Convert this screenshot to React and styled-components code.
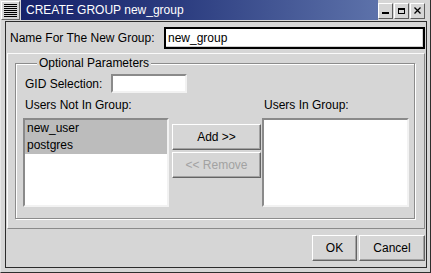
import React from 'react';
import styled, { createGlobalStyle } from 'styled-components';

const GlobalStyle = createGlobalStyle`
  html, body {
    margin: 0;
    padding: 0;
    background: #d6d6d6;
  }
  body {
    font-family: "Liberation Sans", Arial, sans-serif;
    font-size: 12px;
    color: #000;
  }
  * {
    box-sizing: border-box;
  }
`;

const Window = styled.div`
  width: 431px;
  height: 273px;
  display: flex;
  flex-direction: column;
  background: #d6d6d6;
  border-left: 1px solid #e6e6e6;
  border-right: 1px solid #2e2e2e;
  border-bottom: 1px solid #2e2e2e;
  padding: 0 3px 4px 0;
`;

const TitleBar = styled.div`
  height: 21px;
  flex-shrink: 0;
  display: flex;
  align-items: flex-start;
`;

const MenuButton = styled.div`
  width: 19px;
  height: 19px;
  margin-top: 1px;
  display: flex;
  align-items: center;
  justify-content: center;
  background: #d6d6d6;
  border: 1px solid;
  border-color: #fff #6a6a6a #6a6a6a #fff;
`;

const Title = styled.div`
  flex: 1;
  height: 20px;
  margin-left: 1px;
  padding-left: 5px;
  line-height: 20px;
  color: #fff;
  font-size: 12px;
  white-space: nowrap;
  background: linear-gradient(to right, #17226a 0%, #2c3d80 45%, #5d72aa 100%);
`;

const WinButtons = styled.div`
  display: flex;
  gap: 1px;
  margin: 3px 2px 0 0;
`;

const WinButton = styled.div`
  width: 15px;
  height: 16px;
  display: flex;
  align-items: center;
  justify-content: center;
  background: #d6d6d6;
  border: 1px solid;
  border-color: #fff #5e5e5e #5e5e5e #fff;
`;

const Client = styled.div`
  flex: 1;
  margin-left: 4px;
  border: 1px solid #2c2c2c;
  display: flex;
  flex-direction: column;
`;

const NameRow = styled.div`
  display: flex;
  align-items: center;
  padding: 5px 1px 0 4px;
`;

const Label = styled.span`
  white-space: nowrap;
  margin-left: ${p => p.$indent || 0}px;
`;

const NameInput = styled.input`
  width: 261px;
  height: 22px;
  margin-left: auto;
  padding: 0 2px;
  font: inherit;
  color: #000;
  background: #fff;
  border: 2px solid #000;
  box-shadow: inset -1px -1px 0 #cfcfcf;
  outline: none;
`;

const SmallInput = styled.input`
  width: 76px;
  height: 19px;
  padding: 0 2px;
  font: inherit;
  background: #fff;
  border: 2px solid;
  border-color: #8a8a8a #f2f2f2 #f2f2f2 #8a8a8a;
  outline: none;
`;

const Panel = styled.div`
  margin: 4px 1px 0;
  border: 1px solid;
  border-color: #fafafa #8a8a8a #8a8a8a #fafafa;
  padding: 0 9px 0 7px;
`;

const GroupBox = styled.fieldset`
  margin: 2px 0 9px;
  padding: 0;
  min-width: 0;
  border: 1px solid #8c8c8c;
  box-shadow: inset 1px 1px 0 #fff, 1px 1px 0 #fff;
`;

const Legend = styled.legend`
  margin-left: 21px;
  padding: 0 2px;
  height: 14px;
  line-height: 14px;
  background: #d6d6d6;
`;

const GroupBody = styled.div`
  padding: 4px 5px 11px 7px;
`;

const FieldRow = styled.div`
  display: flex;
  align-items: center;
  gap: 9px;
  padding-left: 2px;
`;

const ListsGrid = styled.div`
  display: grid;
  grid-template-columns: 146px 1fr 147px;
  grid-template-rows: 14px 89px;
  row-gap: 6px;
  margin-top: 5px;
`;

const ColumnLabel = styled.div`
  line-height: 14px;
  padding-left: 2px;
  white-space: nowrap;
  grid-column: ${p => p.$col};
`;

const ListBox = styled.div`
  background: #fff;
  border: 2px solid;
  border-color: #8a8a8a #f2f2f2 #f2f2f2 #8a8a8a;
  overflow: hidden;
`;

const ListItem = styled.div`
  height: 17px;
  line-height: 17px;
  padding-left: 2px;
  background: ${p => (p.$selected ? '#bcbcbc' : 'transparent')};
`;

const ButtonStack = styled.div`
  display: flex;
  flex-direction: column;
  gap: 2px;
  padding: 6px 1px 0 3px;
`;

const PushButton = styled.button`
  width: ${p => p.$width || 89}px;
  height: 26px;
  padding: 0;
  font: inherit;
  color: ${p => (p.disabled ? '#a2a2a2' : '#000')};
  background: #d6d6d6;
  border: 1px solid;
  border-color: #fff #646464 #646464 #fff;
  box-shadow: inset -1px -1px 0 #a2a2a2;
  outline: none;
`;

const ButtonRow = styled.div`
  display: flex;
  justify-content: flex-end;
  gap: 2px;
  padding: 6px 1px 6px 0;
`;

function MenuIcon() {
  return (
    <svg width="13" height="13" viewBox="0 0 13 13">
      {[0, 2, 4, 6, 8, 10, 12].map(y => (
        <rect key={y} x="0" y={y} width="13" height="1" fill="#000" />
      ))}
    </svg>
  );
}

function MinimizeIcon() {
  return (
    <svg width="8" height="8" viewBox="0 0 8 8">
      <rect x="0" y="5" width="7" height="2" fill="#000" />
    </svg>
  );
}

function MaximizeIcon() {
  return (
    <svg width="8" height="8" viewBox="0 0 8 8">
      <rect x="0.5" y="1.5" width="6" height="5" fill="none" stroke="#000" />
      <rect x="0" y="1" width="7" height="2" fill="#000" />
    </svg>
  );
}

function CloseIcon() {
  return (
    <svg width="8" height="8" viewBox="0 0 8 8">
      <path d="M0.5 0.5 L6.5 6.5 M6.5 0.5 L0.5 6.5" stroke="#000" strokeWidth="1.3" />
    </svg>
  );
}

export default function App() {
  const notInGroup = ['new_user', 'postgres'];

  return (
    <>
      <GlobalStyle />
      <Window>
        <TitleBar>
          <MenuButton>
            <MenuIcon />
          </MenuButton>
          <Title>CREATE GROUP new_group</Title>
          <WinButtons>
            <WinButton><MinimizeIcon /></WinButton>
            <WinButton><MaximizeIcon /></WinButton>
            <WinButton><CloseIcon /></WinButton>
          </WinButtons>
        </TitleBar>

        <Client>
          <NameRow>
            <Label>Name For The New Group:</Label>
            <NameInput readOnly value="new_group" />
          </NameRow>

          <Panel>
            <GroupBox>
              <Legend>Optional Parameters</Legend>
              <GroupBody>
                <FieldRow>
                  <Label>GID Selection:</Label>
                  <SmallInput readOnly value="" />
                </FieldRow>

                <ListsGrid>
                  <ColumnLabel $col={1}>Users Not In Group:</ColumnLabel>
                  <ColumnLabel $col={3}>Users In Group:</ColumnLabel>
                  <ListBox>
                    {notInGroup.map(name => (
                      <ListItem key={name} $selected>{name}</ListItem>
                    ))}
                  </ListBox>
                  <ButtonStack>
                    <PushButton>Add &gt;&gt;</PushButton>
                    <PushButton disabled>&lt;&lt; Remove</PushButton>
                  </ButtonStack>
                  <ListBox />
                </ListsGrid>
              </GroupBody>
            </GroupBox>
          </Panel>

          <ButtonRow>
            <PushButton $width={45}>OK</PushButton>
            <PushButton $width={66}>Cancel</PushButton>
          </ButtonRow>
        </Client>
      </Window>
    </>
  );
}
